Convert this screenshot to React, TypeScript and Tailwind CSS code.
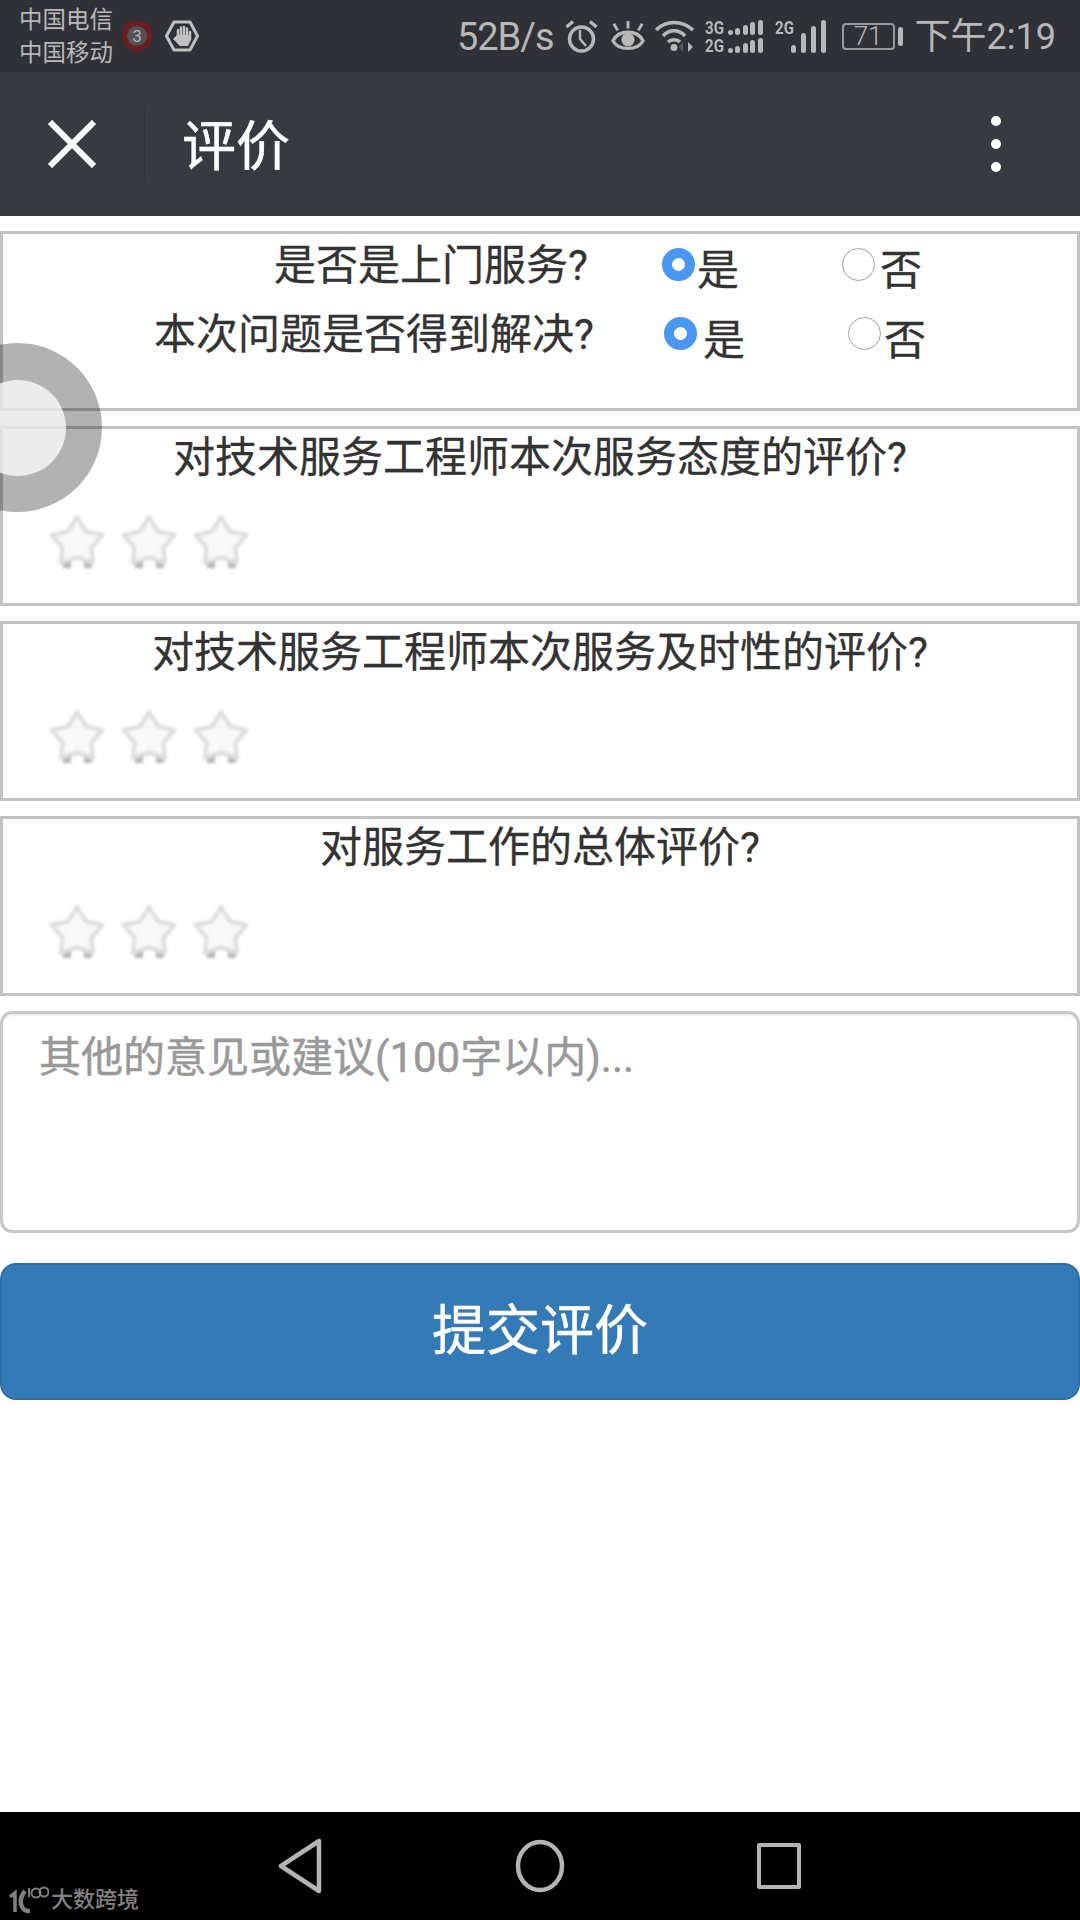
const cjk = "font-['Roboto','Noto_Sans_CJK_SC',sans-serif]";

function Star() {
  return (
    <div className="relative h-[60px] w-[60px]">
      <svg width="60" height="60" viewBox="0 0 60 60" className="blur-[1.5px]">
        <path d="M16 48 H24 V56 H16 Z M37 48 H45 V56 H37 Z" fill="#b4b4b4" />
        <path
          d="M30 5 L39 19.5 L55.5 23 L44.5 35.6 L46 51 L30 45.5 L14 51 L15.5 35.6 L4.5 23 L21 19.5 Z"
          fill="#f9f9f9"
          stroke="#dcdcdc"
          strokeWidth="4"
          strokeLinejoin="round"
        />
      </svg>
    </div>
  );
}

function Stars() {
  return (
    <div className="flex gap-[12px] pl-[44px]">
      <Star />
      <Star />
      <Star />
    </div>
  );
}

function Radio({ checked }: { checked?: boolean }) {
  return checked ? (
    <span className="block size-[33px] rounded-full border-[10px] border-[#4a97f2] bg-white" />
  ) : (
    <span className="block size-[33px] rounded-full border border-[#a0a0a0] bg-white" />
  );
}

function RateCard({ title }: { title: string }) {
  return (
    <div className="h-[180px] border-[3px] border-[#c2c2c2] bg-white">
      <div className="pt-[5px] text-center text-[42px] leading-[48px] text-[#333] [-webkit-text-stroke:0.3px]">{title}</div>
      <div className="mt-[30px]">
        <Stars />
      </div>
    </div>
  );
}

function Bars({ small }: { small?: boolean }) {
  const heights = small ? [5, 7, 10, 13, 15] : [8, 20, 27, 33];
  return (
    <div className={small ? "flex items-end gap-[2.5px]" : "flex items-end gap-[5px]"}>
      {heights.map((h) => (
        <span key={h} className="w-[5px] rounded-full bg-[#b8b8b8]" style={{ height: h }} />
      ))}
    </div>
  );
}

export default function App() {
  return (
    <div className={`relative flex h-[1920px] w-[1080px] flex-col overflow-hidden bg-white ${cjk}`}>
      <div className="flex h-[72px] items-center justify-between bg-[#303136] pl-[19px] pr-[24px] text-[#b8b8b8]">
        <div className="flex items-center">
          <div className="pt-[2px] text-[23.5px] leading-[33px]">
            <div>中国电信</div>
            <div>中国移动</div>
          </div>
          <svg width="32" height="34" viewBox="0 0 32 34" className="ml-[8px]">
            <path d="M3 10 L8 4 M29 10 L24 4 M16 31 V34" stroke="#6f1c20" strokeWidth="3" />
            <circle cx="16" cy="17" r="12.5" fill="#515156" stroke="#6f1c20" strokeWidth="5" />
            <text x="16" y="23" textAnchor="middle" fontSize="17" fill="#b5b5b5">3</text>
          </svg>
          <svg width="34" height="32" viewBox="0 0 34 32" className="ml-[12px]">
            <path d="M9 2 H25 L32.5 16 L25 30 H9 L1.5 16 Z" fill="none" stroke="#c0c0c0" strokeWidth="3" strokeLinejoin="round" />
            <path d="M13 17 V10 M16 16 V7.5 M19 16 V7 M22 16 V8.5 M25 19 V12" fill="none" stroke="#c0c0c0" strokeWidth="2.5" strokeLinecap="round" />
            <path d="M12 15 H26 V20 L23 26 H15 L8 19 L10 17 Z" fill="#c0c0c0" />
          </svg>
        </div>
        <div className="flex items-center">
          <span className="mt-[2px] text-[38px] leading-none tracking-[-1px]">52B/s</span>
          <svg width="33" height="33" viewBox="0 0 33 33" className="ml-[11px]" fill="none" stroke="#b8b8b8">
            <circle cx="16.5" cy="19" r="12" strokeWidth="3.5" />
            <path d="M15 10 V19 L21 26" strokeWidth="2.5" />
            <path d="M1.5 7 L8 1.5 M31.5 7 L25 1.5" strokeWidth="3.5" />
          </svg>
          <svg width="34" height="32" viewBox="0 0 36 34" className="ml-[13px]" fill="none" stroke="#b8b8b8">
            <path d="M2 22 C8 10 28 10 34 22 C28 33 8 33 2 22 Z" strokeWidth="3.5" />
            <circle cx="18" cy="21" r="7" fill="#b8b8b8" stroke="none" />
            <path d="M18 9 V1 M7 11 L3 4 M29 11 L33 4" strokeWidth="3" />
          </svg>
          <svg width="40" height="32" viewBox="0 0 40 32" className="ml-[10px]" fill="none" stroke="#b8b8b8" strokeWidth="3.5">
            <path d="M1 10 C11 0 27 0 38 10" />
            <path d="M8 16 C14 9 24 9 30 16" />
            <path d="M13 22 C16 19 22 19 25 22" />
            <circle cx="19" cy="27.5" r="3.5" fill="#b8b8b8" stroke="none" />
            <path d="M28 22 L28 32 L24 27 Z" fill="#5c5c5f" stroke="none" />
            <path d="M33 22 L33 32 L38 27 Z" fill="#b8b8b8" stroke="none" />
          </svg>
          <div className="ml-[10px] flex w-[58px] flex-col gap-[3px] text-[19px] font-bold leading-[15px]">
            <div className="flex items-end justify-between"><span className="w-[18px] origin-left scale-x-[.8]">3G</span><Bars small /></div>
            <div className="flex items-end justify-between"><span className="w-[18px] origin-left scale-x-[.8]">2G</span><Bars small /></div>
          </div>
          <div className="relative ml-[12px] h-[33px] w-[51px]">
            <span className="absolute left-0 top-0 origin-left scale-x-[.8] text-[19px] font-bold leading-[15px]">2G</span>
            <div className="absolute bottom-0 right-0"><Bars /></div>
          </div>
          <div className="ml-[16px] flex items-center">
            <div className="flex h-[27px] w-[53px] items-center justify-center rounded-[4px] border-2 border-[#999] text-[26px] font-light leading-none">71</div>
            <span className="ml-[3px] h-[19px] w-[5px] rounded-full bg-[#b8b8b8]" />
          </div>
          <span className="ml-[12px] mt-[2px] text-[36px] leading-none">下午2:19</span>
        </div>
      </div>

      <div className="flex h-[144px] items-center bg-[#393a3f] pr-[79px]">
        <div className="flex w-[144px] items-center justify-center">
          <svg width="48" height="48" viewBox="0 0 48 48" stroke="#fff" strokeWidth="6" className="mr-[1px]">
            <path d="M2 2 L46 46 M46 2 L2 46" />
          </svg>
        </div>
        <div className="h-[74px] w-px bg-[#2f3034]" />
        <span className="ml-[37px] mt-[7px] text-[54px] leading-none text-white [-webkit-text-stroke:0.5px]">评价</span>
        <div className="ml-auto flex flex-col gap-[13px]">
          <span className="size-[10px] rounded-full bg-white" />
          <span className="size-[10px] rounded-full bg-white" />
          <span className="size-[10px] rounded-full bg-white" />
        </div>
      </div>

      <div className="mt-[15px] flex flex-col gap-[15px]">
        <div className="h-[180px] border-[3px] border-[#c2c2c2] bg-white text-[42px] leading-[48px] text-[#333] [-webkit-text-stroke:0.3px]">
          <div className="flex h-[60px] items-center">
            <span className="ml-[271px] mt-[4px] w-[388px]">是否是上门服务?</span>
            <Radio checked />
            <span className="ml-[2px] mt-[14px]">是</span>
            <span className="ml-[103px]"><Radio /></span>
            <span className="ml-[5px] mt-[14px]">否</span>
          </div>
          <div className="flex h-[78px] items-center">
            <span className="ml-[151px] mt-[4px] w-[510px]">本次问题是否得到解决?</span>
            <Radio checked />
            <span className="ml-[6px] mt-[16px]">是</span>
            <span className="ml-[103px]"><Radio /></span>
            <span className="ml-[3px] mt-[16px]">否</span>
          </div>
        </div>
        <RateCard title="对技术服务工程师本次服务态度的评价?" />
        <RateCard title="对技术服务工程师本次服务及时性的评价?" />
        <RateCard title="对服务工作的总体评价?" />

        <div className="h-[222px] rounded-[12px] border-[3px] border-[#c8c8c8] bg-white pl-[36px] pt-[20px] text-[42px] leading-[48px] text-[#999] shadow-[inset_0_2px_2px_rgba(0,0,0,0.07)] [-webkit-text-stroke:0.5px]">
          其他的意见或建议(100字以内)...
        </div>
      </div>

      <div className="mt-[30px] flex h-[137px] items-center justify-center rounded-[16px] border-2 border-[#2e6da4] bg-[#337ab7] text-[54px] leading-none text-white [-webkit-text-stroke:0.5px]">
        提交评价
      </div>

      <div className="absolute left-[-67px] top-[343px] flex size-[169px] items-center justify-center rounded-full bg-black/30">
        <div className="size-[96px] rounded-full bg-white/75" />
      </div>

      <div className="relative mt-auto flex h-[108px] items-center bg-black pb-[2px]">
        <svg width="46" height="56" viewBox="0 0 46 56" fill="none" stroke="#b4b4b4" strokeWidth="4.5" strokeLinejoin="round" className="ml-[278px] mt-[1px]">
          <path d="M41 3 L3 28 L41 53 Z" />
        </svg>
        <svg width="50" height="54" viewBox="0 0 50 54" fill="none" stroke="#b4b4b4" strokeWidth="4.5" className="ml-[191px] mt-[1px]">
          <ellipse cx="25" cy="27" rx="22" ry="24" />
        </svg>
        <div className="ml-[192px] mt-[2px] h-[46px] w-[44px] rounded-[2px] border-[4.5px] border-[#b4b4b4]" />
        <div className="absolute bottom-[6px] left-[9px] flex items-center text-[22px] font-medium leading-none text-[#808080]">
          <svg width="40" height="28" viewBox="0 0 40 28" fill="none" stroke="#808080">
            <path d="M1 11 L6 7 V26" strokeWidth="3.5" />
            <path d="M16 5 C9 13 11 26 21 25" strokeWidth="4.5" />
            <path d="M20 2 V11" strokeWidth="2" />
            <circle cx="27" cy="7" r="4.5" strokeWidth="2" />
            <circle cx="35" cy="6" r="4.5" strokeWidth="2" />
          </svg>
          <span className="ml-[2px]">大数跨境</span>
        </div>
      </div>
    </div>
  );
}
